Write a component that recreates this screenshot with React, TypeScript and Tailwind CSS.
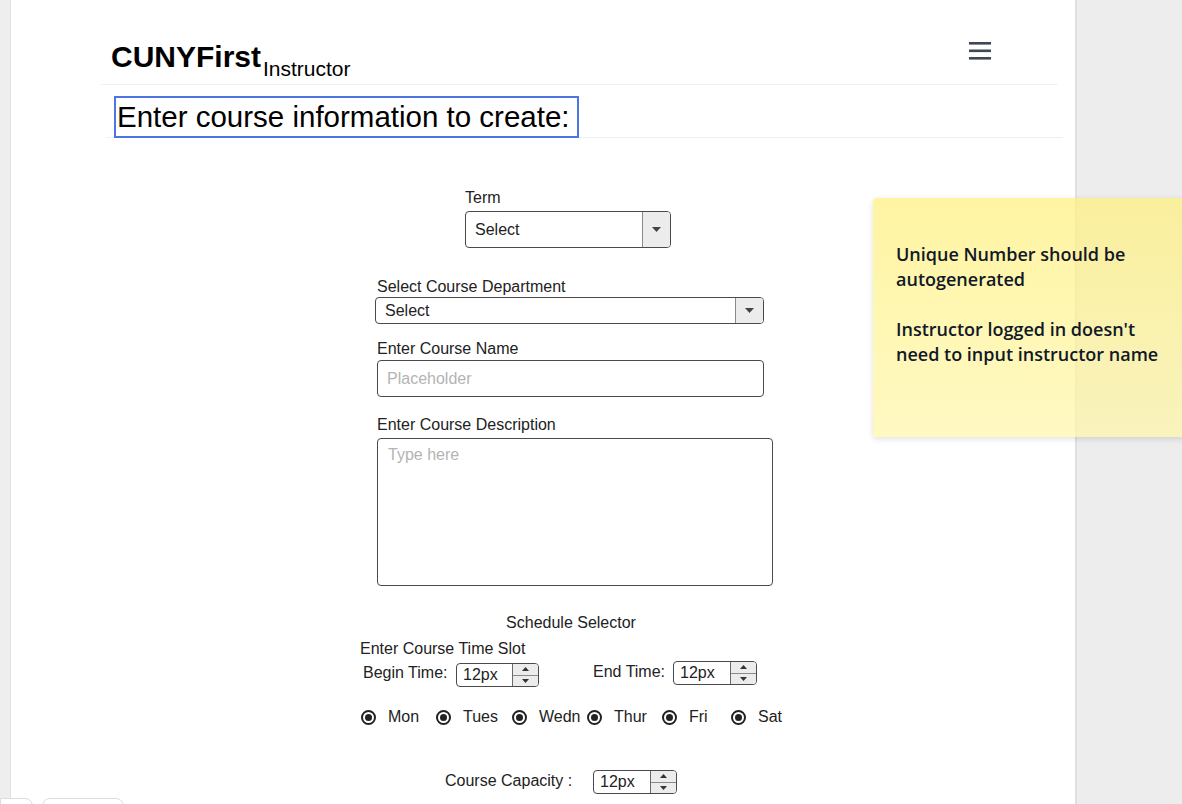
import React from 'react';

const font = "font-['Liberation_Sans',Arial,sans-serif]";

const Caret = () => (
  <svg width="9" height="5" viewBox="0 0 9 5">
    <path d="M0 0h9L4.5 5z" fill="#444" />
  </svg>
);

const SelectBox = ({ className }: { className: string }) => (
  <div className={`flex border border-[#4a4a4a] rounded-[4px] overflow-hidden bg-white ${className}`}>
    <div className="flex-1 flex items-center pl-[9px] text-[16px] text-[#222]">Select</div>
    <div className="w-[28px] flex items-center justify-center bg-[#ececec] border-l border-[#8a8a8a]">
      <Caret />
    </div>
  </div>
);

const Spinner = ({ className }: { className: string }) => (
  <div className={`flex h-[24px] border border-[#4a4a4a] rounded-[4px] overflow-hidden bg-white ${className}`}>
    <div className="flex-1 flex items-center pl-[6px] text-[16px] text-[#222] leading-none">12px</div>
    <div className="w-[26px] flex flex-col bg-[#ececec] border-l border-[#6a6a6a]">
      <div className="flex-1 flex items-center justify-center border-b border-[#8a8a8a]">
        <svg width="7" height="4" viewBox="0 0 7 4">
          <path d="M0 4h7L3.5 0z" fill="#333" />
        </svg>
      </div>
      <div className="flex-1 flex items-center justify-center">
        <svg width="7" height="4" viewBox="0 0 7 4">
          <path d="M0 0h7L3.5 4z" fill="#333" />
        </svg>
      </div>
    </div>
  </div>
);

const days = [
  { label: 'Mon', w: 'w-[75px]' },
  { label: 'Tues', w: 'w-[76px]' },
  { label: 'Wedn', w: 'w-[75px]' },
  { label: 'Thur', w: 'w-[75px]' },
  { label: 'Fri', w: 'w-[69px]' },
  { label: 'Sat', w: 'w-[60px]' },
];

const App = () => {
  return (
    <div className={`relative flex h-[804px] w-[1182px] overflow-hidden bg-[#ededed] ${font}`}>
      {/* left strip */}
      <div className="w-[11px] shrink-0 bg-[#eeeeee] border-r border-[#e2e2e2]" />

      {/* page canvas */}
      <div className="w-[1066px] shrink-0 bg-white border-r-2 border-[#e0e0e0] text-[#222]">
        {/* header */}
        <div className="ml-[90px] w-[957px] h-[85px] border-b border-[#edf1f7] flex items-start">
          <div className="ml-[10px] mt-[40px] text-[30px] leading-[34px] font-bold text-black">CUNYFirst</div>
          <div className="ml-[2px] mt-[58px] text-[21px] leading-[22px] text-black">Instructor</div>
          <svg className="ml-auto mr-[67px] mt-[41px]" width="22" height="19" viewBox="0 0 22 19">
            <rect x="0" y="1" width="22" height="2.6" fill="#3f4654" />
            <rect x="0" y="8.5" width="22" height="2.6" fill="#3f4654" />
            <rect x="0" y="16" width="22" height="2.6" fill="#3f4654" />
          </svg>
        </div>

        {/* page title */}
        <div className="ml-[95px] w-[957px] h-[53px] pt-[11px] border-b border-[#edf1f7]">
          <div className="ml-[8px] w-[465px] h-[42px] border-2 border-[#4f74e3] pl-[1px] flex items-center text-[29.5px] leading-[32px] text-black">
            Enter course information to create:
          </div>
        </div>

        {/* form */}
        <div className="text-[16px] leading-[20px] text-[#222]">
          <div className="ml-[454px] mt-[50px]">Term</div>
          <SelectBox className="ml-[454px] mt-[3px] w-[206px] h-[37px]" />

          <div className="ml-[366px] mt-[29px]">Select Course Department</div>
          <SelectBox className="ml-[364px] w-[389px] h-[27px]" />

          <div className="ml-[366px] mt-[15px]">Enter Course Name</div>
          <div className="ml-[366px] mt-[1px] w-[387px] h-[37px] border border-[#4a4a4a] rounded-[4px] flex items-center pl-[9px] text-[#b4b4b4]">
            Placeholder
          </div>

          <div className="ml-[366px] mt-[18px]">Enter Course Description</div>
          <div className="ml-[366px] mt-[3px] w-[396px] h-[148px] border border-[#4a4a4a] rounded-[4px] pl-[10px] pt-[6px] text-[#b4b4b4]">
            Type here
          </div>

          <div className="ml-[460px] mt-[27px] w-[200px] text-center">Schedule Selector</div>
          <div className="ml-[349px] mt-[6px]">Enter Course Time Slot</div>

          <div className="ml-[352px] mt-[2px] flex items-start">
            <div className="w-[93px] mt-[2px]">Begin Time:</div>
            <Spinner className="w-[83px] mt-[2px]" />
            <div className="ml-[54px] w-[80px] mt-[1px]">End Time:</div>
            <Spinner className="w-[84px]" />
          </div>

          <div className="ml-[350px] mt-[20px] flex items-center">
            {days.map((d) => (
              <div key={d.label} className={`${d.w} flex items-center`}>
                <div className="w-[15px] h-[15px] rounded-full border-2 border-[#222] flex items-center justify-center">
                  <div className="w-[7px] h-[7px] rounded-full bg-[#222]" />
                </div>
                <span className="ml-[12px]">{d.label}</span>
              </div>
            ))}
          </div>

          <div className="ml-[434px] mt-[44px] flex items-start">
            <div className="w-[148px]">Course Capacity :</div>
            <Spinner className="w-[84px] -mt-[1px]" />
          </div>
        </div>
      </div>

      {/* sticky note */}
      <div className="absolute left-[873px] top-[198px] w-[330px] h-[239px] rounded-[3px] bg-gradient-to-b from-[#fff07a]/70 to-[#fff6a8]/70 shadow-[0_2px_6px_rgba(0,0,0,0.12)] pl-[23px] pt-[44px] font-['Open_Sans',sans-serif] font-semibold text-[18px] leading-[25px] text-[#111827]">
        <p>Unique Number should be<br />autogenerated</p>
        <p className="mt-[25px]">Instructor logged in doesn't<br />need to input instructor name</p>
      </div>

      {/* bottom tabs */}
      <div className="absolute left-0 top-[798px] w-[33px] h-[12px] bg-white border border-[#dddddd] rounded-tr-[8px]" />
      <div className="absolute left-[42px] top-[798px] w-[82px] h-[12px] bg-white border border-[#dddddd] rounded-t-[8px]" />
    </div>
  );
};

export default App;
